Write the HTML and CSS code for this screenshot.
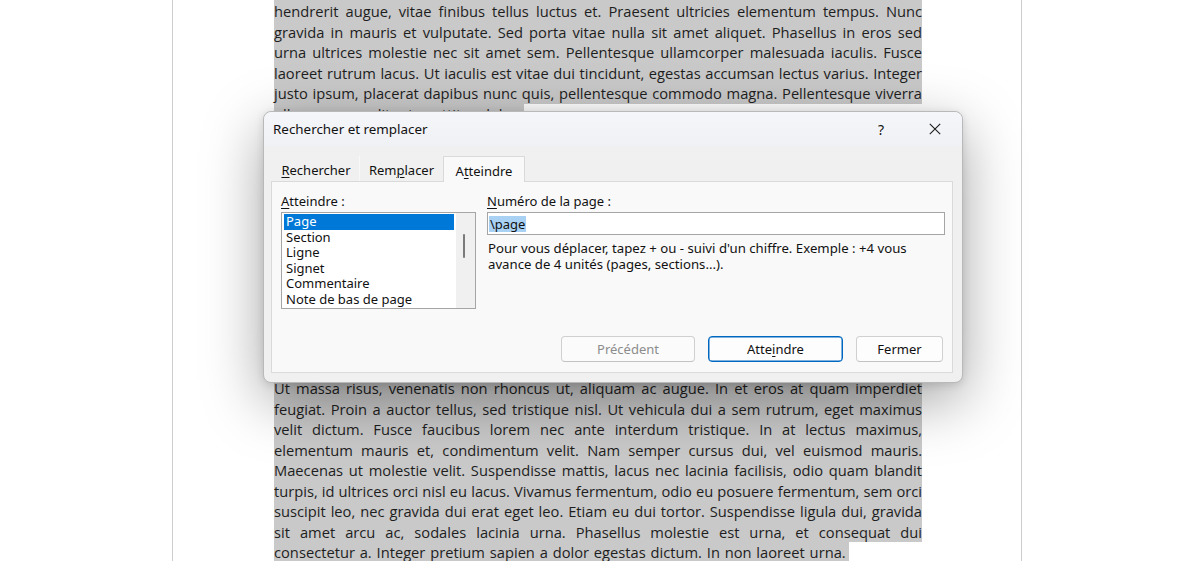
FILE: index.html
```html
<!DOCTYPE html>
<html lang="fr">
<head>
<meta charset="utf-8">
<title>Rechercher et remplacer</title>
<link rel="stylesheet" href="styles.css">
</head>
<body>
<div class="page">
  <div class="para top">
    <div class="ln">hendrerit augue, vitae finibus tellus luctus et. Praesent ultricies elementum tempus. Nunc</div>
    <div class="ln">gravida in mauris et vulputate. Sed porta vitae nulla sit amet aliquet. Phasellus in eros sed</div>
    <div class="ln">urna ultrices molestie nec sit amet sem. Pellentesque ullamcorper malesuada iaculis. Fusce</div>
    <div class="ln">laoreet rutrum lacus. Ut iaculis est vitae dui tincidunt, egestas accumsan lectus varius. Integer</div>
    <div class="ln">justo ipsum, placerat dapibus nunc quis, pellentesque commodo magna. Pellentesque viverra</div>
    <div class="ln last">ullamcorper velit, ut porttitor dolor.</div>
  </div>
  <div class="para bottom">
    <div class="ln">Ut massa risus, venenatis non rhoncus ut, aliquam ac augue. In et eros at quam imperdiet</div>
    <div class="ln">feugiat. Proin a auctor tellus, sed tristique nisl. Ut vehicula dui a sem rutrum, eget maximus</div>
    <div class="ln">velit dictum. Fusce faucibus lorem nec ante interdum tristique. In at lectus maximus,</div>
    <div class="ln">elementum mauris et, condimentum velit. Nam semper cursus dui, vel euismod mauris.</div>
    <div class="ln">Maecenas ut molestie velit. Suspendisse mattis, lacus nec lacinia facilisis, odio quam blandit</div>
    <div class="ln">turpis, id ultrices orci nisl eu lacus. Vivamus fermentum, odio eu posuere fermentum, sem orci</div>
    <div class="ln">suscipit leo, nec gravida dui erat eget leo. Etiam eu dui tortor. Suspendisse ligula dui, gravida</div>
    <div class="ln">sit amet arcu ac, sodales lacinia urna. Phasellus molestie est urna, et consequat dui</div>
    <div class="ln last">consectetur a. Integer pretium sapien a dolor egestas dictum. In non laoreet urna.</div>
  </div>
</div>

<div class="dialog">
  <div class="titlebar">
    <span class="title">Rechercher et remplacer</span>
    <span class="help">?</span>
    <span class="close">
      <svg width="12" height="12" viewBox="0 0 12 12"><path d="M0.8 0.8 L11.2 11.2 M11.2 0.8 L0.8 11.2" stroke="#1b1b1b" stroke-width="1.1" fill="none"/></svg>
    </span>
  </div>
  <div class="tabs">
    <div class="tab t1"><u>R</u>echercher</div>
    <div class="tab t2">Rem<u>p</u>lacer</div>
    <div class="tab t3 active">A<u>t</u>teindre</div>
  </div>
  <div class="panel">
    <div class="fields">
      <div class="col-left">
        <div class="label"><u>A</u>tteindre :</div>
        <div class="listbox">
          <div class="items">
            <div class="item sel">Page</div>
            <div class="item">Section</div>
            <div class="item">Ligne</div>
            <div class="item">Signet</div>
            <div class="item">Commentaire</div>
            <div class="item">Note de bas de page</div>
          </div>
          <div class="scroll"><div class="thumb"></div></div>
        </div>
      </div>
      <div class="col-right">
        <div class="label"><u>N</u>uméro de la page :</div>
        <div class="input"><span class="hl">\page</span></div>
        <p class="hint">Pour vous déplacer, tapez + ou - suivi d'un chiffre. Exemple : +4 vous<br>avance de 4 unités (pages, sections...).</p>
      </div>
    </div>
    <div class="buttons">
      <div class="btn prev">Précédent</div>
      <div class="btn go">Atte<u>i</u>ndre</div>
      <div class="btn close-btn">Fermer</div>
    </div>
  </div>
</div>
</body>
</html>
```

FILE: styles.css
```css
html, body {
  margin: 0;
  padding: 0;
  background: #ffffff;
}
body {
  width: 1200px;
  height: 561px;
  overflow: hidden;
  position: relative;
}
.page {
  margin-left: 172px;
  width: 850px;
  height: 561px;
  box-sizing: border-box;
  border-left: 1px solid #cdcdcd;
  border-right: 1px solid #cdcdcd;
  padding: 0 99px 0 101px;
  font-family: "Open Sans", sans-serif;
  font-size: 14.7px;
  color: #1e1e1e;
  overflow: hidden;
}
.para.top {
  padding-top: 1px;
  background: linear-gradient(#c9c9c9, #c9c9c9) no-repeat top left / 100% 1px;
}
.para.bottom {
  margin-top: 254px;
}
.ln {
  line-height: 20.5px;
  height: 20.5px;
  background: #c9c9c9;
  text-align: justify;
  text-align-last: justify;
  white-space: nowrap;
}
.ln.last {
  text-align-last: left;
  width: fit-content;
  padding-right: 3px;
  word-spacing: 1px;
}

/* Dialog */
.dialog {
  position: absolute;
  left: 263px;
  top: 111px;
  width: 700px;
  height: 272px;
  box-sizing: border-box;
  border: 1px solid #b9b9b9;
  border-radius: 8px;
  background: #f0f0f0;
  box-shadow: 0 18px 60px rgba(0, 0, 0, 0.36), 0 2px 8px rgba(0, 0, 0, 0.12);
  font-family: "Noto Sans", sans-serif;
  font-size: 13px;
  color: #111111;
  display: flex;
  flex-direction: column;
}
.titlebar {
  height: 34px;
  display: flex;
  align-items: center;
  padding-left: 9px;
  border-radius: 8px 8px 0 0;
  background: linear-gradient(#f4f6fa, #eff1f4);
}
.title {
  margin-right: auto;
  font-size: 13.4px;
}
.help {
  width: 54px;
  text-align: center;
  font-size: 14px;
}
.close {
  width: 54px;
  display: flex;
  justify-content: center;
  align-items: center;
}
.close svg {
  display: block;
}
.tabs {
  display: flex;
  height: 25px;
  margin-top: 10px;
  margin-left: 7px;
  position: relative;
  z-index: 1;
}
.tab {
  display: flex;
  align-items: center;
  justify-content: center;
  box-sizing: border-box;
  height: 25px;
  padding-top: 3px;
}
.t1 { width: 89px; border-right: 1px solid #f8f8f8; padding-left: 2px; }
.t2 { width: 83px; }
.t3 { width: 82px; }
.tab.active {
  background: #f9f9f9;
  border: 1px solid #dadada;
  border-bottom: none;
  height: 26px;
  padding-top: 2px;
}
.panel {
  flex: 1;
  margin: 0 9px 9px 7px;
  border: 1px solid #dadada;
  background: #f9f9f9;
  display: flex;
  flex-direction: column;
}
.fields {
  display: flex;
  padding: 11px 7px 0 9px;
  gap: 11px;
}
.label {
  line-height: 16px;
  height: 16px;
}
.col-left {
  width: 195px;
  display: flex;
  flex-direction: column;
}
.listbox {
  margin-top: 3px;
  height: 97px;
  box-sizing: border-box;
  border: 1px solid #a5a5a5;
  background: #ffffff;
  display: flex;
}
.items {
  flex: 1;
  padding: 1px 2px;
}
.item {
  height: 15.5px;
  line-height: 15.5px;
  padding-left: 2px;
}
.item.sel {
  background: #0078d7;
  color: #ffffff;
}
.scroll {
  width: 19px;
  background: #f0f0f0;
  position: relative;
}
.thumb {
  position: absolute;
  left: 7px;
  top: 21px;
  width: 2px;
  height: 24px;
  border-radius: 1px;
  background: #7a7a7a;
}
.col-right {
  flex: 1;
  display: flex;
  flex-direction: column;
}
.input {
  margin-top: 3px;
  height: 23px;
  box-sizing: border-box;
  border: 1px solid #a5a5a5;
  background: #ffffff;
  display: flex;
  align-items: center;
  padding-left: 1px;
}
.hl {
  background: #a9d1f3;
  line-height: 16px;
  padding: 0 1px;
}
.hint {
  margin: 5px 0 0 1px;
  line-height: 16px;
  font-size: 13.2px;
}
.buttons {
  margin-top: auto;
  display: flex;
  justify-content: flex-end;
  gap: 13px;
  padding: 0 9px 10px 0;
}
.btn {
  height: 26px;
  box-sizing: border-box;
  border: 1px solid #d0d0d0;
  border-bottom-color: #c2c2c2;
  border-radius: 4px;
  background: #fdfdfd;
  display: flex;
  align-items: center;
  justify-content: center;
}
.prev {
  width: 134px;
  color: #8c8c8c;
  background: #fbfbfb;
}
.go {
  width: 135px;
  border: 1px solid #0067c0;
  box-shadow: inset 0 0 0 0.5px #0067c0;
}
.close-btn {
  width: 87px;
}
u {
  text-decoration-thickness: 1px;
  text-underline-offset: 2px;
}
```
